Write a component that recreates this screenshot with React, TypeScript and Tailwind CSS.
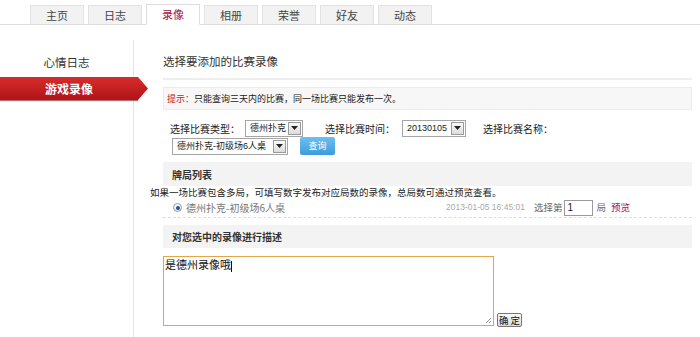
import React from 'react';

const tabs = ['主页', '日志', '录像', '相册', '荣誉', '好友', '动态'];
const cjk = '"Noto Sans CJK SC", "Liberation Sans", sans-serif';
const mixed = '"Liberation Sans", "Noto Sans CJK SC", sans-serif';

function FakeSelect({ value, width }: { value: string; width: string }) {
  return (
    <span className={`inline-flex items-center h-[17px] border border-[#a5a5a5] bg-white ${width}`}>
      <span className="flex-1 pl-[4px] text-[9px] leading-[15px] text-[#222] whitespace-nowrap overflow-hidden" style={{ fontFamily: mixed }}>
        {value}
      </span>
      <span className="w-[13px] h-[13px] mr-[1px] border border-[#9a9a9a] bg-gradient-to-b from-[#fafafa] to-[#dcdcdc] flex items-center justify-center shrink-0">
        <svg width="7" height="4" viewBox="0 0 7 4">
          <path d="M0 0h7L3.5 4z" fill="#222" />
        </svg>
      </span>
    </span>
  );
}

function SectionBar({ title, h }: { title: string; h: string }) {
  return (
    <div className={`${h} bg-[#f3f3f3] flex items-center pl-[9px] text-[10px] font-bold text-[#333]`}>{title}</div>
  );
}

export default function App() {
  return (
    <div className="w-[700px] h-[337px] bg-white overflow-hidden text-[#333]" style={{ fontFamily: cjk }}>
      {/* 顶部标签 */}
      <div className="h-[25px] border-b border-[#dcdcdc] flex items-end pl-[30px] gap-[4px]">
        {tabs.map((t) => (
          <div
            key={t}
            className={
              t === '录像'
                ? 'w-[54px] h-[21px] -mb-px bg-white border border-[#dcdcdc] border-b-white flex items-center justify-center text-[11px] text-[#a0144a]'
                : 'w-[54px] h-[19px] bg-[#f2f2f2] border border-[#e2e2e2] border-b-0 flex items-center justify-center text-[11px] text-[#444]'
            }
          >
            {t}
          </div>
        ))}
      </div>

      <div className="flex items-start">
        {/* 左侧菜单 */}
        <div className="mt-[15px] w-[134px] h-[297px] border-r border-[#e4e4e4] shrink-0">
          <div className="h-[37px] pt-[14px] leading-[16px] text-center text-[11.5px] text-[#333]">心情日志</div>
          <div className="relative h-[23px] w-[138px] bg-gradient-to-b from-[#d62c2c] to-[#b11318] flex items-center justify-center text-[12px] font-bold text-white shadow-[0_1px_1px_rgba(110,0,0,0.55)]">
            游戏录像
            <svg className="absolute left-[137px] top-0" width="11" height="23" viewBox="0 0 11 23">
              <defs>
                <linearGradient id="ar" x1="0" y1="0" x2="0" y2="1">
                  <stop offset="0" stopColor="#d62c2c" />
                  <stop offset="1" stopColor="#b11318" />
                </linearGradient>
              </defs>
              <path d="M0 0h1l10 11.5L1 23H0z" fill="url(#ar)" />
            </svg>
          </div>
        </div>

        {/* 主内容 */}
        <div className="flex-1 pl-[29px] pr-[8px]">
          <div className="mt-[26px] h-[22px] flex items-center text-[11.5px] text-[#333]">选择要添加的比赛录像</div>
          <div className="mt-[5px] h-[2px] bg-[#eeeeee]" />
          <div className="mt-[7px] h-[23px] bg-[#f7f7f7] border border-[#ececec] flex items-center pl-[3px] text-[9px] text-[#222]">
            <span className="text-[#c4161c]">提示：</span>只能查询三天内的比赛，同一场比赛只能发布一次。
          </div>

          <div className="mt-[9px] pl-[7px] flex items-center h-[18px] text-[10px] text-[#222]">
            <span className="w-[75px]">选择比赛类型：</span>
            <FakeSelect value="德州扑克" width="w-[58px]" />
            <span className="ml-[22px] w-[77px]">选择比赛时间：</span>
            <FakeSelect value="20130105" width="w-[64px]" />
            <span className="ml-[17px]">选择比赛名称：</span>
          </div>
          <div className="pl-[9px] flex items-center h-[18px]">
            <FakeSelect value="德州扑克-初级场6人桌" width="w-[116px]" />
            <span className="ml-[12px] w-[35px] h-[18px] rounded-[2px] bg-gradient-to-b from-[#6cc0f2] to-[#3d9bd9] text-white text-[9px] flex items-center justify-center">查询</span>
          </div>

          <div className="mt-[7px]">
            <SectionBar title="牌局列表" h="h-[24px]" />
          </div>
          <div className="-ml-[13px] h-[12px] leading-[12px] text-[9.5px] text-[#222] whitespace-nowrap">
            如果一场比赛包含多局，可填写数字发布对应局数的录像，总局数可通过预览查看。
          </div>
          <div className="h-[20px] flex items-center border-b border-dashed border-[#dddddd] text-[9.5px]">
            <span className="ml-[10px] w-[9px] h-[9px] rounded-full border border-[#8a9bb0] bg-gradient-to-b from-white to-[#dde6f0] flex items-center justify-center">
              <span className="w-[4px] h-[4px] rounded-full bg-[#2a4f86]" />
            </span>
            <span className="ml-[4px] text-[10px] text-[#777]">德州扑克-初级场6人桌</span>
            <span className="ml-auto text-[8.5px] text-[#aaaaaa]" style={{ fontFamily: '"Liberation Sans", sans-serif' }}>
              2013-01-05 16:45:01
            </span>
            <span className="ml-[9px] text-[#666]">选择第</span>
            <span className="ml-[2px] w-[29px] h-[16px] border border-[#9a9a9a] bg-white text-[10px] leading-[14px] px-[2px] text-[#222]" style={{ fontFamily: '"Liberation Sans", sans-serif' }}>
              1
            </span>
            <span className="ml-[3px] text-[#666]">局</span>
            <span className="ml-[5px] mr-[62px] text-[#a0144a]">预览</span>
          </div>

          <div className="mt-[7px]">
            <SectionBar title="对您选中的录像进行描述" h="h-[23px]" />
          </div>
          <div className="mt-[8px] flex items-end gap-[3px]">
            <div className="relative w-[331px] h-[70px] border border-[#e5a445] bg-white px-[1px] text-[11px] leading-[14px] text-[#111]">
              是德州录像哦<span className="inline-block w-px h-[11px] bg-[#111] align-middle" />
              <svg className="absolute right-[1px] bottom-[1px]" width="7" height="7" viewBox="0 0 7 7">
                <path d="M6 1L1 6M6 4L4 6" stroke="#999" strokeWidth="1" />
              </svg>
            </div>
            <span className="mb-[-1px] w-[25px] h-[14px] border border-[#777] rounded-[2px] bg-gradient-to-b from-[#fafafa] to-[#dcdcdc] text-[9.5px] text-[#111] whitespace-nowrap flex items-center justify-center">
              确 定
            </span>
          </div>
        </div>
      </div>
    </div>
  );
}
